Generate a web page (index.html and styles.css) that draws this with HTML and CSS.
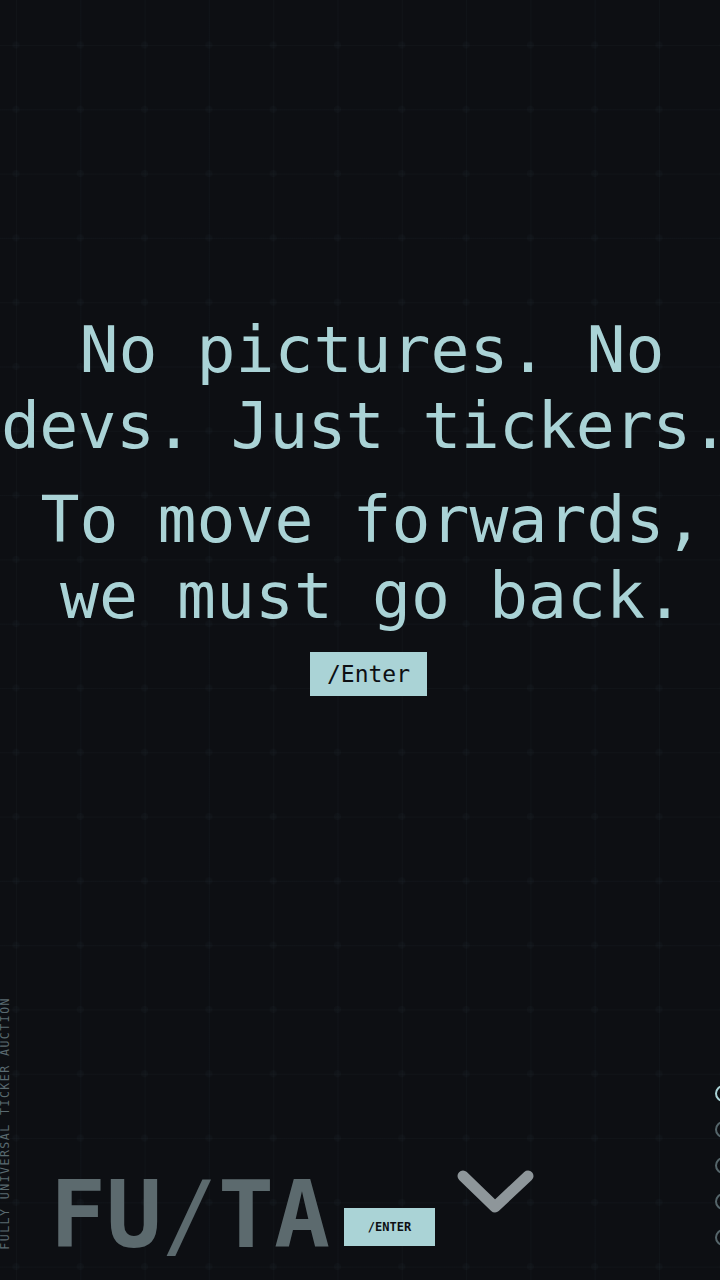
FILE: index.html
```html
<!DOCTYPE html>
<html lang="en">
<head>
<meta charset="utf-8">
<title>FU/TA</title>
<link rel="stylesheet" href="styles.css">
</head>
<body>
<div class="page">
  <main class="hero">
    <p class="line-group">
      <span class="line">No pictures. No</span>
      <span class="line tight">devs. Just tickers.</span>
    </p>
    <p class="line-group second">
      <span class="line">To move forwards,</span>
      <span class="line">we must go back.</span>
    </p>
    <button class="enter-btn">/Enter</button>
  </main>

  <footer class="footer">
    <div class="vlabel">FULLY UNIVERSAL TICKER AUCTION</div>
    <div class="logo">FU<span class="slash">/</span>TA</div>
    <button class="enter-small">/ENTER</button>
    <svg class="chevron" width="80" height="56" viewBox="0 0 80 56" aria-hidden="true">
      <path d="M7 12 L39 43 L72 12" fill="none" stroke="#8e969a" stroke-width="11" stroke-linecap="round" stroke-linejoin="round"/>
    </svg>
  </footer>

  <nav class="dots" aria-label="sections">
    <span class="dot active"></span>
    <span class="dot"></span>
    <span class="dot"></span>
    <span class="dot"></span>
    <span class="dot"></span>
  </nav>
</div>
</body>
</html>
```

FILE: styles.css
```css
html, body {
  margin: 0;
  padding: 0;
}

body {
  width: 720px;
  height: 1280px;
  overflow: hidden;
  background-color: #0d0f13;
  background-image:
    radial-gradient(circle, rgba(90, 130, 140, 0.04) 0 3px, transparent 4px),
    linear-gradient(to right, rgba(120, 160, 170, 0.035) 0 1px, transparent 1px),
    linear-gradient(to bottom, rgba(120, 160, 170, 0.035) 0 1px, transparent 1px);
  background-size: 64.3px 64.3px;
  background-position: -16.15px 12.85px, 16px 45px, 16px 45px;
  font-family: "DejaVu Sans Mono", "Liberation Mono", monospace;
}

.page {
  position: relative;
  width: 720px;
  height: 1280px;
  display: flex;
  flex-direction: column;
}

.hero {
  width: 744px;
  padding-top: 312px;
  text-align: center;
  color: #aad3d6;
}

.line-group {
  margin: 0;
  font-size: 64.8px;
  line-height: 76px;
}

.line-group.second {
  margin-top: 18px;
}

.line {
  display: block;
  white-space: pre;
}

.line.tight {
  letter-spacing: -0.7px;
  text-align: left;
  padding-left: 1px;
}

.enter-btn {
  margin: 18px 7px 0 0;
  height: 44px;
  padding: 0 17px;
  border: 0;
  border-radius: 0;
  background: #aad3d6;
  color: #0d0f13;
  font-family: "DejaVu Sans Mono", "Liberation Mono", monospace;
  font-size: 23px;
  line-height: 44px;
}

.footer {
  margin-top: auto;
  padding-bottom: 18px;
  display: flex;
  align-items: flex-end;
}

.vlabel {
  writing-mode: vertical-rl;
  transform: rotate(180deg);
  width: 11px;
  margin-bottom: 12px;
  font-size: 11.5px;
  line-height: 11px;
  letter-spacing: 1.5px;
  color: #5a6a70;
  white-space: nowrap;
}

.logo {
  margin-left: 39px;
  font-size: 93px;
  line-height: 93px;
  font-weight: bold;
  color: #5c6a6e;
  white-space: pre;
}

.logo .slash {
  font-weight: normal;
}

.enter-small {
  margin: 0 0 16px 14px;
  width: 91px;
  height: 38px;
  padding: 0;
  border: 0;
  border-radius: 0;
  background: #aad3d6;
  color: #0d0f13;
  font-family: "DejaVu Sans Mono", "Liberation Mono", monospace;
  font-size: 12px;
  font-weight: bold;
  line-height: 38px;
}

.chevron {
  display: block;
  margin: 0 0 42px 21px;
}

.dots {
  position: absolute;
  left: 715px;
  top: 1085px;
  display: flex;
  flex-direction: column;
  gap: 19px;
}

.dot {
  display: block;
  width: 13px;
  height: 13px;
  border: 2px solid #55656a;
  border-radius: 50%;
}

.dot.active {
  border-color: #aad3d6;
}
```
